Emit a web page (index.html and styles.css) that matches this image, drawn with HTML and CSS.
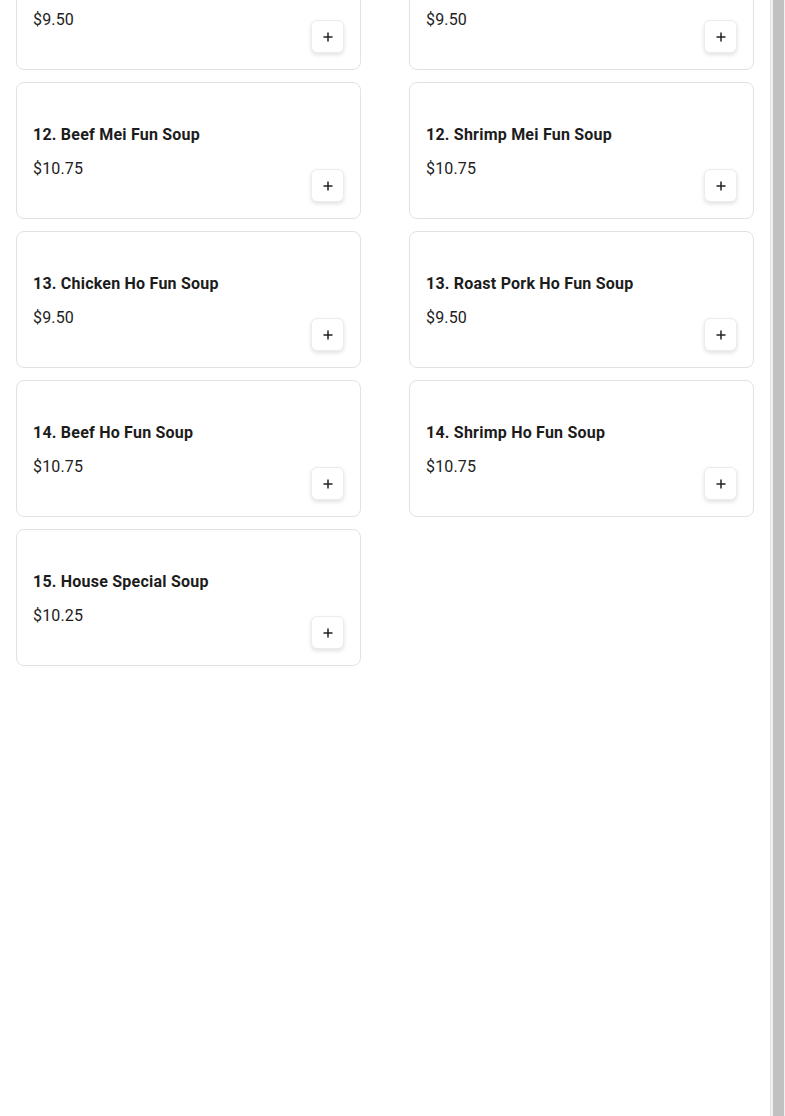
FILE: index.html
```html
<!DOCTYPE html>
<html>
<head>
<meta charset="utf-8">
<link rel="stylesheet" href="styles.css">
</head>
<body>
<div class="page">
  <main class="content">
    <div class="grid">
      <div class="card"><div class="info"><div class="title">11. Roast Pork Mei Fun Soup</div><div class="price">$9.50</div></div><button class="add"><svg width="12" height="12" viewBox="0 0 12 12"><path d="M6 1.5v9M1.5 6h9" stroke="#222" stroke-width="1.5"/></svg></button></div>
      <div class="card"><div class="info"><div class="title">11. Chicken Mei Fun Soup</div><div class="price">$9.50</div></div><button class="add"><svg width="12" height="12" viewBox="0 0 12 12"><path d="M6 1.5v9M1.5 6h9" stroke="#222" stroke-width="1.5"/></svg></button></div>
      <div class="card"><div class="info"><div class="title">12. Beef Mei Fun Soup</div><div class="price">$10.75</div></div><button class="add"><svg width="12" height="12" viewBox="0 0 12 12"><path d="M6 1.5v9M1.5 6h9" stroke="#222" stroke-width="1.5"/></svg></button></div>
      <div class="card"><div class="info"><div class="title">12. Shrimp Mei Fun Soup</div><div class="price">$10.75</div></div><button class="add"><svg width="12" height="12" viewBox="0 0 12 12"><path d="M6 1.5v9M1.5 6h9" stroke="#222" stroke-width="1.5"/></svg></button></div>
      <div class="card"><div class="info"><div class="title">13. Chicken Ho Fun Soup</div><div class="price">$9.50</div></div><button class="add"><svg width="12" height="12" viewBox="0 0 12 12"><path d="M6 1.5v9M1.5 6h9" stroke="#222" stroke-width="1.5"/></svg></button></div>
      <div class="card"><div class="info"><div class="title">13. Roast Pork Ho Fun Soup</div><div class="price">$9.50</div></div><button class="add"><svg width="12" height="12" viewBox="0 0 12 12"><path d="M6 1.5v9M1.5 6h9" stroke="#222" stroke-width="1.5"/></svg></button></div>
      <div class="card"><div class="info"><div class="title">14. Beef Ho Fun Soup</div><div class="price">$10.75</div></div><button class="add"><svg width="12" height="12" viewBox="0 0 12 12"><path d="M6 1.5v9M1.5 6h9" stroke="#222" stroke-width="1.5"/></svg></button></div>
      <div class="card"><div class="info"><div class="title">14. Shrimp Ho Fun Soup</div><div class="price">$10.75</div></div><button class="add"><svg width="12" height="12" viewBox="0 0 12 12"><path d="M6 1.5v9M1.5 6h9" stroke="#222" stroke-width="1.5"/></svg></button></div>
      <div class="card"><div class="info"><div class="title">15. House Special Soup</div><div class="price">$10.25</div></div><button class="add"><svg width="12" height="12" viewBox="0 0 12 12"><path d="M6 1.5v9M1.5 6h9" stroke="#222" stroke-width="1.5"/></svg></button></div>
    </div>
  </main>
  <div class="scrollbar"><div class="thumb"></div></div>
</div>
</body>
</html>
```
FILE: styles.css
```css
html, body {
  margin: 0;
  padding: 0;
  height: 100%;
  overflow: hidden;
  background: #fff;
  font-family: Roboto, "Liberation Sans", sans-serif;
}
.page {
  display: flex;
  height: 1116px;
}
.content {
  flex: 1;
  padding: 0 16px;
  overflow: hidden;
}
.grid {
  display: grid;
  grid-template-columns: 345px 345px;
  column-gap: 48px;
  row-gap: 12px;
  margin-top: -67px;
}
.card {
  box-sizing: border-box;
  height: 137px;
  border: 1px solid #e2e2e2;
  border-radius: 8px;
  padding: 16px;
  display: flex;
  justify-content: space-between;
  align-items: flex-end;
}
.info {
  padding-top: 24px;
  padding-bottom: 21px;
}
.title {
  font-size: 16px;
  line-height: 24px;
  font-weight: 700;
  color: #1c1c1c;
  letter-spacing: 0.22px;
}
.price {
  margin-top: 10px;
  font-size: 16px;
  line-height: 24px;
  color: #222;
  letter-spacing: 0.15px;
}
.add {
  width: 33px;
  height: 33px;
  box-sizing: border-box;
  border: 1px solid #ececec;
  border-radius: 6px;
  background: #fff;
  box-shadow: 0 2px 4px rgba(0,0,0,0.12);
  display: flex;
  align-items: center;
  justify-content: center;
  padding: 0;
}
.scrollbar {
  width: 15px;
  flex: none;
  background: #f1f1f1;
  box-sizing: border-box;
  padding: 0 1px 0 2px;
  border-left: 1px solid #e6e6e6;
}
.thumb {
  height: 100%;
  background: #c1c1c1;
}
```
